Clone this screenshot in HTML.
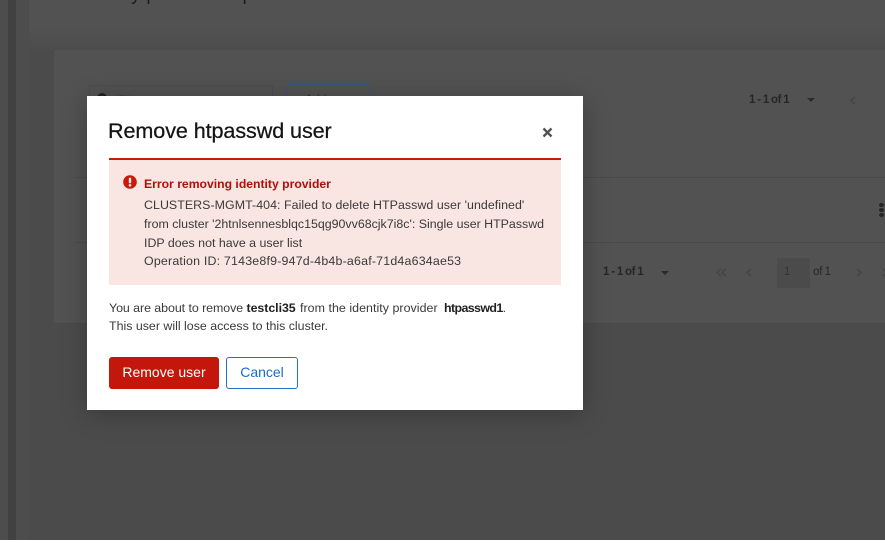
<!DOCTYPE html>
<html><head><meta charset="utf-8">
<style>
*{box-sizing:border-box}
html,body{margin:0;padding:0;width:885px;height:543px;overflow:hidden;background:#fff}
body{font-family:"Liberation Sans",sans-serif;position:relative}
.a{position:absolute;white-space:nowrap}
.t{font-size:12.4px;line-height:19px;color:#3a3a3a}
.bg{color:#262626;font-size:11.5px;font-weight:bold;letter-spacing:-.4px;word-spacing:-.6px}
svg{display:block}
</style></head><body>
<div class="a" style="left:0;top:0;width:885px;height:540px;background:#4b4b4b;overflow:hidden">
 <div class="a" style="left:0;top:0;width:8px;height:540px;background:#4d4d4d"></div>
 <div class="a" style="left:8px;top:0;width:8px;height:540px;background:#414141"></div>
 <div class="a" style="left:16px;top:0;width:13px;height:540px;background:#4d4d4d"></div>
 <div class="a" style="left:29px;top:0;width:856px;height:28px;background:#525252"></div>
 <div class="a" style="left:29px;top:28px;width:856px;height:22px;background:linear-gradient(#525252,#4c4c4c)"></div>
 <div class="a" style="left:54px;top:50px;width:831px;height:274px;background:#525252;border-bottom:1px solid #494949"></div>
 <div class="a" style="left:75px;top:177px;width:810px;height:1px;background:#4a4a4a"></div>
 <div class="a" style="left:75px;top:242px;width:810px;height:1px;background:#4a4a4a"></div>
 <div class="a" style="left:287px;top:84px;width:84px;height:40px;border:1px solid #3a5478;border-radius:3px"></div>
 <div class="a" style="left:305px;top:92px;color:#333;font-size:12px">Add user</div>
 <div class="a" style="left:89px;top:85px;width:184px;height:30px;border:1px solid #4d4d4d"></div>
 <div class="a" style="left:97px;top:93px;width:10px;height:10px;border-radius:50%;background:#222"></div>
 <div class="a" style="left:118px;top:93px;color:#3a3a3a;font-size:12px">Filter</div>
 <div class="a bg" style="left:749px;top:94px">1 - 1 of 1</div>
 <div class="a" style="left:807px;top:98px;border:4px solid transparent;border-top:4px solid #2a2a2a;border-bottom:0"></div>
 <svg class="a" style="left:849px;top:96px" width="8" height="9" viewBox="0 0 8 9"><path d="M6 .8L2 4.5L6 8.2" stroke="#454545" stroke-width="1.5" fill="none"/></svg>
 <div class="a" style="left:879px;top:203px;width:5px;height:4px;border-radius:50%;background:#262626"></div>
 <div class="a" style="left:879px;top:208px;width:5px;height:4px;border-radius:50%;background:#262626"></div>
 <div class="a" style="left:879px;top:213px;width:5px;height:4px;border-radius:50%;background:#262626"></div>
 <div class="a bg" style="left:603px;top:266px">1 - 1 of 1</div>
 <div class="a" style="left:661px;top:271px;border:4px solid transparent;border-top:4px solid #2a2a2a;border-bottom:0"></div>
 <svg class="a" style="left:715px;top:268px" width="13" height="9" viewBox="0 0 13 9"><path d="M6 .8L2 4.5L6 8.2M11 .8L7 4.5L11 8.2" stroke="#454545" stroke-width="1.5" fill="none"/></svg>
 <svg class="a" style="left:745px;top:268px" width="8" height="9" viewBox="0 0 8 9"><path d="M6 .8L2 4.5L6 8.2" stroke="#454545" stroke-width="1.5" fill="none"/></svg>
 <div class="a" style="left:777px;top:258px;width:33px;height:30px;background:#4b4b4b"></div>
 <div class="a" style="left:784px;top:266px;color:#333;font-size:11.5px">1</div>
 <div class="a" style="left:813px;top:266px;color:#262626;font-size:11.5px;letter-spacing:-.2px;word-spacing:-.6px">of 1</div>
 <svg class="a" style="left:855px;top:268px" width="8" height="9" viewBox="0 0 8 9"><path d="M2 .8L6 4.5L2 8.2" stroke="#454545" stroke-width="1.5" fill="none"/></svg>
 <svg class="a" style="left:881px;top:268px" width="8" height="9" viewBox="0 0 8 9"><path d="M2 .8L6 4.5L2 8.2" stroke="#454545" stroke-width="1.5" fill="none"/></svg>
 <div class="a" style="left:78px;top:0;width:330px;height:4px;overflow:hidden"><div style="margin-top:-16px;font-size:19px;color:#1c1c1c;letter-spacing:.2px">Identity providers update</div></div>
</div>
<div class="a" style="left:87px;top:96px;width:496px;height:314px;background:#fff;box-shadow:0 4px 24px rgba(0,0,0,.25)"></div>
<div class="a" style="left:108px;top:118px;font-size:21.6px;line-height:26px;color:#151515;letter-spacing:-.1px;-webkit-text-stroke:.25px #151515">Remove htpasswd user</div>
<svg class="a" style="left:542px;top:127px" width="11" height="11" viewBox="0 0 11 11"><path d="M1.5 1.5L9.5 9.5M9.5 1.5L1.5 9.5" stroke="#4f5255" stroke-width="2.3" fill="none"/></svg>
<div class="a" style="left:109px;top:158px;width:452px;height:127px;background:#f9e5e2;border-top:2px solid #c9190b"></div>
<svg class="a" style="left:123px;top:175px" width="14" height="14" viewBox="0 0 14 14"><circle cx="7" cy="7" r="6.8" fill="#c9190b"/><rect x="5.8" y="2.8" width="2.4" height="5.4" rx=".6" fill="#f9e5e2"/><circle cx="7" cy="10.3" r="1.3" fill="#f9e5e2"/></svg>
<div class="a" style="left:144px;top:175px;font-size:12.2px;line-height:18px;font-weight:bold;color:#b0100a">Error removing identity provider</div>
<div class="a t" style="left:144px;top:196px;letter-spacing:.05px">CLUSTERS-MGMT-404: Failed to delete HTPasswd user 'undefined'</div>
<div class="a t" style="left:144px;top:215px">from cluster '2htnlsennesblqc15qg90vv68cjk7i8c': Single user HTPasswd</div>
<div class="a t" style="left:144px;top:234px">IDP does not have a user list</div>
<div class="a t" style="left:144px;top:252px;letter-spacing:.2px">Operation ID: 7143e8f9-947d-4b4b-a6af-71d4a634ae53</div>
<div class="a t" style="left:109px;top:299px;letter-spacing:-.05px">You are about to remove <b style="color:#222">testcli35</b></div>
<div class="a t" style="left:300px;top:299px;letter-spacing:.05px">from the identity provider</div>
<div class="a t" style="left:444px;top:299px;letter-spacing:-.6px"><b style="color:#222">htpasswd1</b>.</div>
<div class="a t" style="left:109px;top:317px">This user will lose access to this cluster.</div>
<div class="a" style="left:109px;top:357px;width:110px;height:32px;background:#c3170b;border-radius:3px;color:#fff;font-size:14px;line-height:31px;text-align:center">Remove user</div>
<div class="a" style="left:226px;top:357px;width:72px;height:32px;background:#fff;border:1px solid #2a70c8;border-radius:3px;color:#1a6ccc;font-size:14px;line-height:29px;text-align:center">Cancel</div>
</body></html>
